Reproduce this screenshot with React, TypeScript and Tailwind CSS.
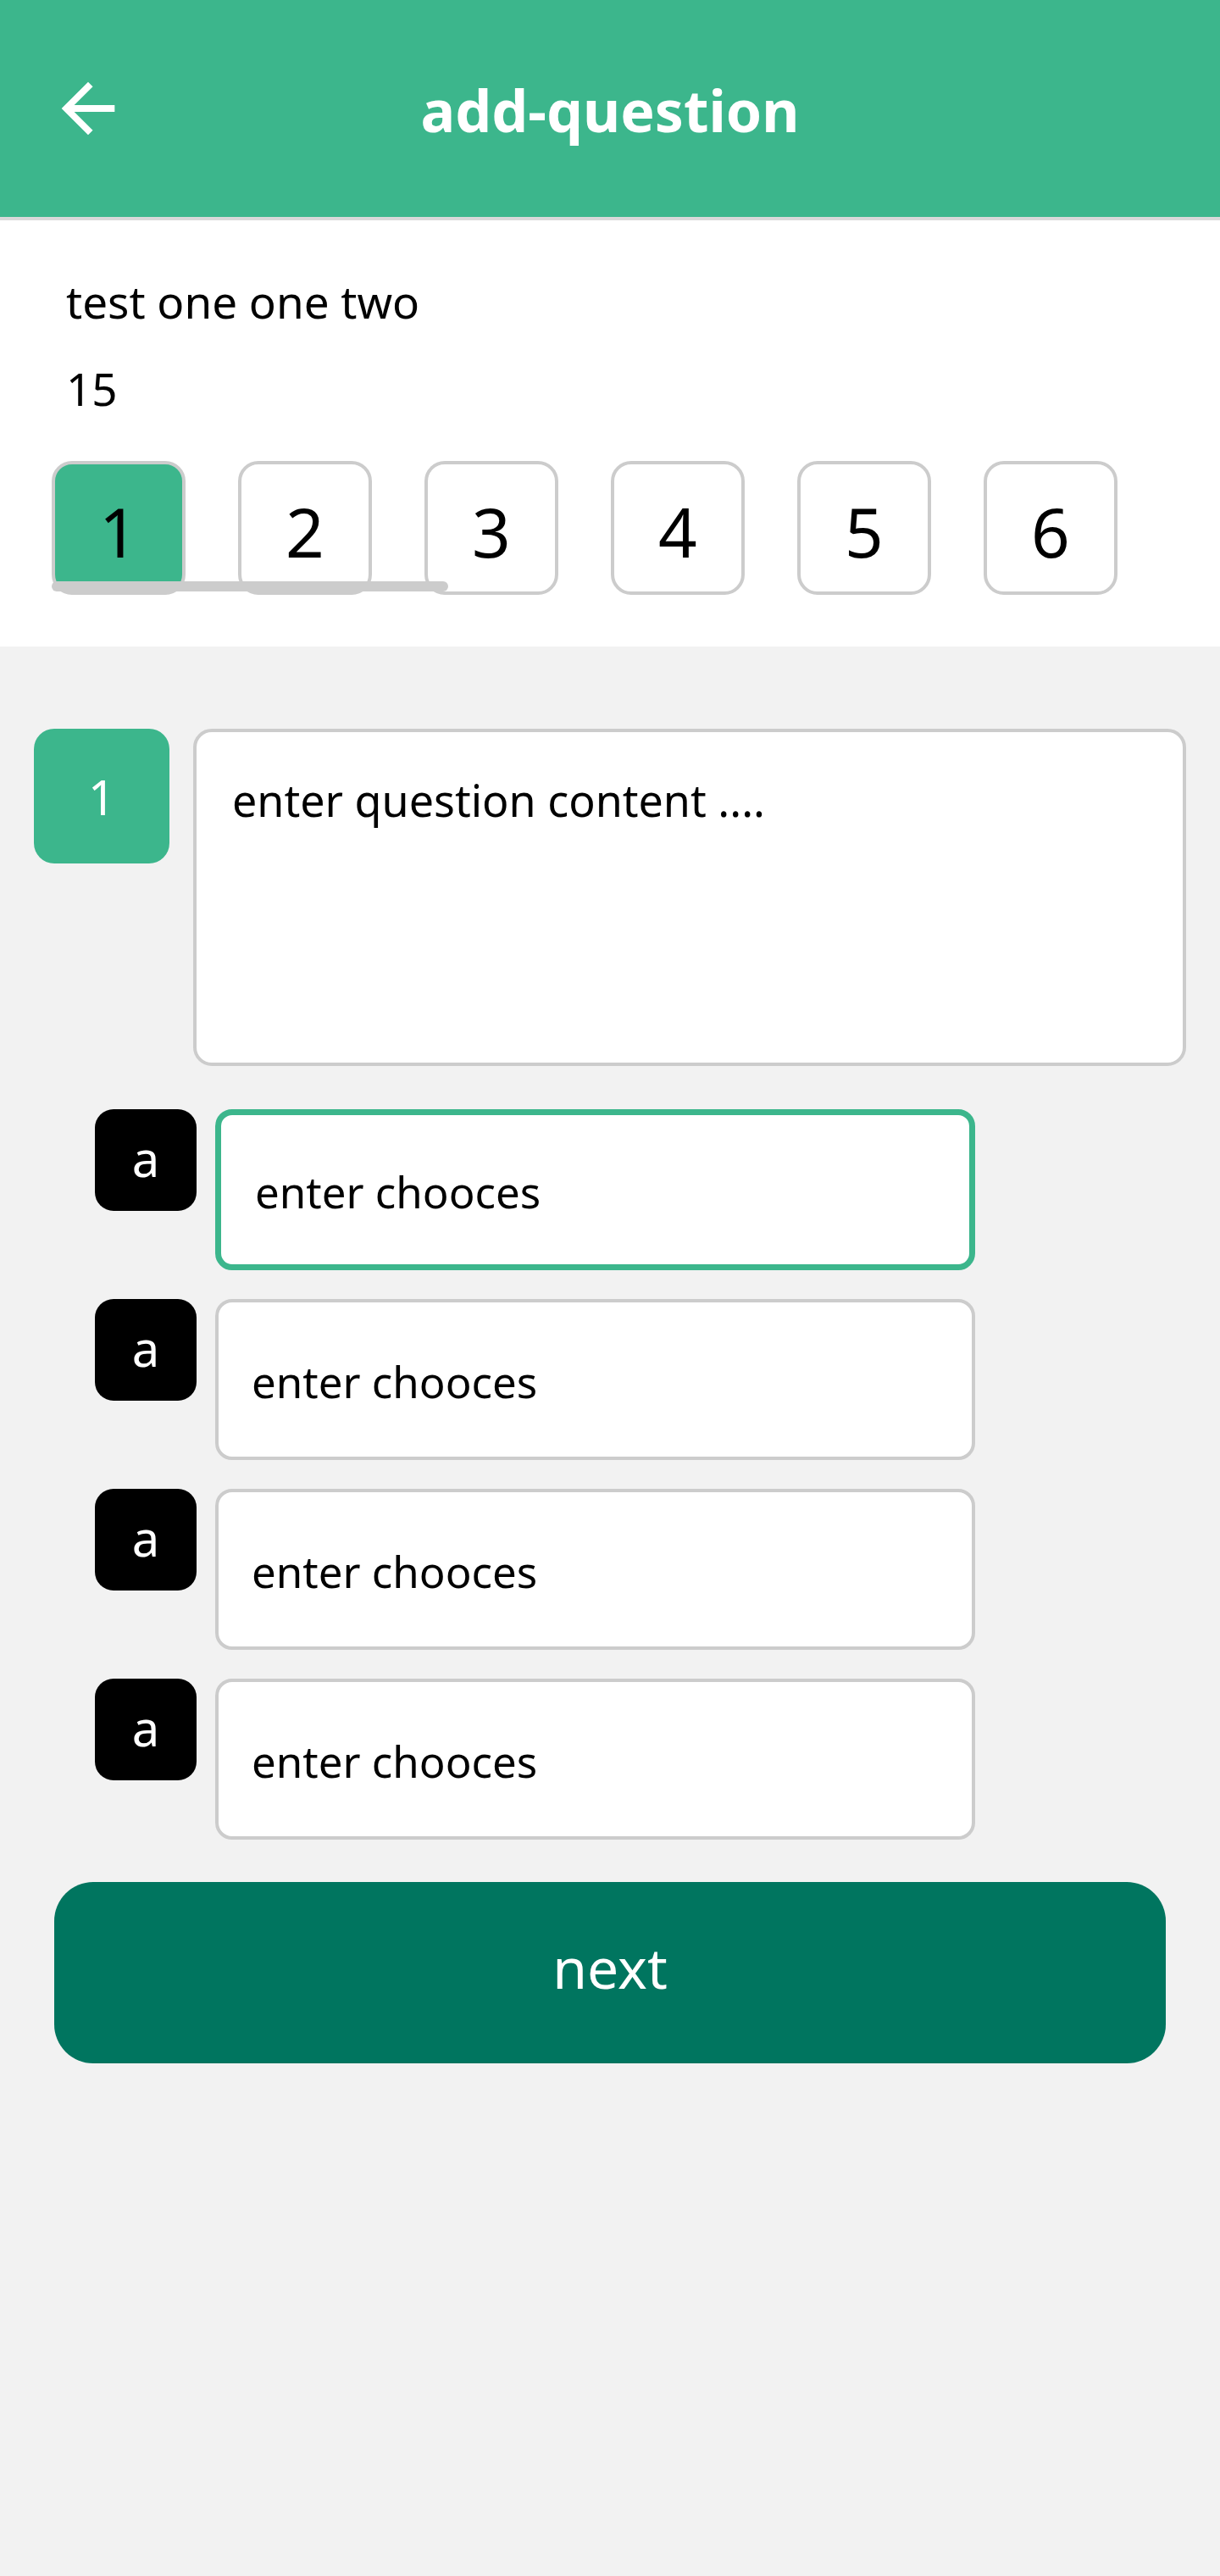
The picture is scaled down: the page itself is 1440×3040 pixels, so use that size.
const numbers = [1, 2, 3, 4, 5, 6];
const options = [0, 1, 2, 3];

function BackArrow() {
  return (
    <svg width="94" height="94" viewBox="0 0 24 24" fill="white">
      <path d="M20 11H7.83l5.59-5.59L12 4l-8 8 8 8 1.41-1.41L7.83 13H20v-2z" />
    </svg>
  );
}

export default function App() {
  return (
    <div className="min-h-[3040px] w-[1440px] bg-[#f2f2f2] font-['Noto_Sans',sans-serif] text-black">
      {/* app bar */}
      <div className="relative flex h-[260px] items-center justify-center border-b-4 border-[#d9d9d9] bg-[#3cb68c]">
        <div className="absolute left-[57px] top-[81px]">
          <BackArrow />
        </div>
        <h1 className="mt-[4px] text-[68px] font-bold leading-none text-white">add-question</h1>
      </div>

      {/* exam info */}
      <div className="bg-white pl-[78px] pt-[59px] pb-[61px]">
        <p className="text-[53px] leading-[74px]">test one one two</p>
        <p className="mt-[29px] text-[53px] leading-[74px]">15</p>
        <div className="relative -ml-[17px] mt-[48px] flex gap-[62px]">
          {numbers.map((n) => (
            <div
              key={n}
              className={
                n === 1
                  ? 'flex h-[158px] w-[158px] items-center justify-center rounded-[24px] border-4 border-[#cccccc] bg-[#3cb68c] pt-[8px] text-[80px] leading-none'
                  : 'flex h-[158px] w-[158px] items-center justify-center rounded-[24px] border-4 border-[#cccccc] bg-white pt-[8px] text-[80px] leading-none'
              }
            >
              {n}
            </div>
          ))}
          <div className="absolute left-0 top-[142px] h-[12px] w-[468px] rounded-full bg-[#cccccc]" />
        </div>
      </div>

      {/* question */}
      <div className="flex gap-[28px] px-[40px] pt-[97px]">
        <div className="flex h-[159px] w-[160px] shrink-0 items-center justify-center rounded-[24px] bg-[#3cb68c] text-[56px] text-white">
          1
        </div>
        <div className="h-[398px] flex-1 rounded-[22px] border-4 border-[#cccccc] bg-white pl-[42px] pt-[45px] text-[52px] leading-[70px]">
          enter question content ....
        </div>
      </div>

      {/* choices */}
      <div className="mt-[51px] flex flex-col gap-[34px] pl-[112px]">
        {options.map((i) => (
          <div key={i} className="flex gap-[22px]">
            <div className="flex h-[120px] w-[120px] items-center justify-center rounded-[22px] bg-black pb-[4px] text-[58px] leading-none text-white">
              a
            </div>
            <div
              className={
                i === 0
                  ? 'h-[190px] w-[897px] rounded-[20px] border-[7px] border-[#3cb68c] bg-white pl-[40px] pt-[55px] text-[51px] leading-[70px]'
                  : 'h-[190px] w-[897px] rounded-[20px] border-4 border-[#cccccc] bg-white pl-[39px] pt-[58px] text-[51px] leading-[70px]'
              }
            >
              enter chooces
            </div>
          </div>
        ))}
      </div>

      <div className="mx-[64px] mt-[50px]">
        <button className="flex h-[214px] w-full items-center justify-center rounded-[46px] bg-[#00755f] pb-[14px] text-[66px] text-white">
          next
        </button>
      </div>
    </div>
  );
}
